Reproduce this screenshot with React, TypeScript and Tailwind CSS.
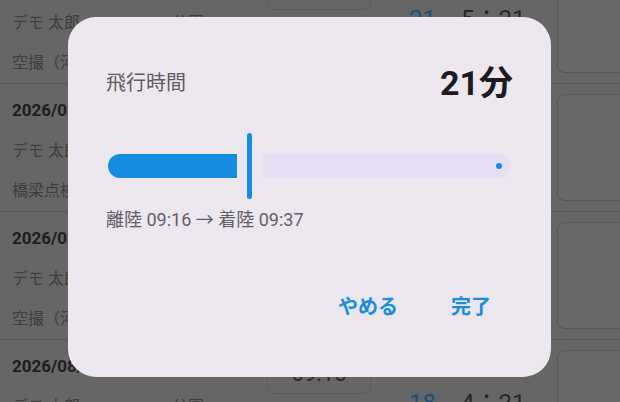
import React from "react";

const font = { fontFamily: 'Roboto, "Noto Sans CJK JP", sans-serif' };

type Group = {
  date: string;
  name: string;
  place: string;
  desc: string;
  time: string;
  count: string;
  dur: string;
};

const groups: Group[] = [
  { date: "2026/08/12", name: "デモ 太郎", place: "公園", desc: "空撮（河川敷）", time: "10:02", count: "21", dur: "5：21" },
  { date: "2026/08/11", name: "デモ 太郎", place: "公園", desc: "橋梁点検", time: "09:40", count: "16", dur: "3：12" },
  { date: "2026/08/10", name: "デモ 太郎", place: "公園", desc: "空撮（河川敷）", time: "13:20", count: "12", dur: "2：48" },
  { date: "2026/08/09", name: "デモ 太郎", place: "公園", desc: "空撮（河川敷）", time: "09:15", count: "18", dur: "4：21" },
];

function Row({ g }: { g: Group }) {
  return (
    <div className="relative flex h-[128px] shrink-0 border-b border-[#5b5b5b]">
      <div className="flex w-[255px] shrink-0 flex-col pl-[12px] pt-[7px]">
        <div className="flex h-10 items-center text-[17px] font-bold text-[#1e1e1e]">{g.date}</div>
        <div className="flex h-10 items-center text-[16px] text-[#3e3e3e]">
          <span className="w-[160px]">{g.name}</span>
          <span>{g.place}</span>
        </div>
        <div className="flex h-10 items-center text-[16px] text-[#3e3e3e]">{g.desc}</div>
      </div>
      <div className="ml-[12px] mt-[12px] flex h-[42px] w-[104px] items-center justify-center rounded-lg border border-[#5a5a5a] text-[22px] text-[#2a2a2a]">
        {g.time}
      </div>
      <div className="ml-[38px] mt-[47px] flex h-[32px] items-center text-[24px]">
        <span className="w-[52px] text-[#1d4f74]">{g.count}</span>
        <span className="text-[#262626]">{g.dur}</span>
      </div>
      <div className="absolute left-[557px] top-[10px] h-[107px] w-[90px] rounded-lg border border-[#575757] bg-[#686868]" />
    </div>
  );
}

export default function App() {
  return (
    <div className="relative h-[402px] w-[620px] overflow-hidden bg-[#666666]" style={font}>
      <div className="-mt-[44px] flex flex-col">
        {groups.map((g, i) => (
          <Row key={i} g={g} />
        ))}
      </div>

      <div className="absolute left-[68px] top-[17px] flex h-[360px] w-[483px] flex-col rounded-[28px] bg-[#ECE7EE] px-[38px] pt-[48px]">
        <div className="flex h-[36px] items-center justify-between">
          <span className="text-[20px] text-[#5f5b63]">飛行時間</span>
          <span className="text-[34px] font-bold text-[#1d1b20]">21分</span>
        </div>

        <div className="mt-[32px] flex h-[66px] items-center pl-[2px] pr-[2px]">
          <div className="h-[24px] w-[129px] rounded-l-full rounded-r-[3px] bg-[#168de0]" />
          <div className="ml-[10px] h-[66px] w-[5px] rounded-full bg-[#168de0]" />
          <div className="ml-[10px] flex h-[24px] flex-1 items-center justify-end rounded-l-[3px] rounded-r-full bg-[#E5DEF5] pr-[9px]">
            <div className="h-[6px] w-[6px] rounded-full bg-[#168de0]" />
          </div>
        </div>

        <div className="mt-[8px] flex h-[24px] items-center text-[18px] text-[#625e66]">
          離陸 09:16 → 着陸 09:37
        </div>

        <div className="mt-[56px] flex justify-end gap-[26px] pr-[8px]">
          <button className="flex h-[40px] items-center px-[13px] text-[20px] font-semibold text-[#1a8ddb]">やめる</button>
          <button className="flex h-[40px] items-center px-[14px] text-[20px] font-semibold text-[#1a8ddb]">完了</button>
        </div>
      </div>
    </div>
  );
}
